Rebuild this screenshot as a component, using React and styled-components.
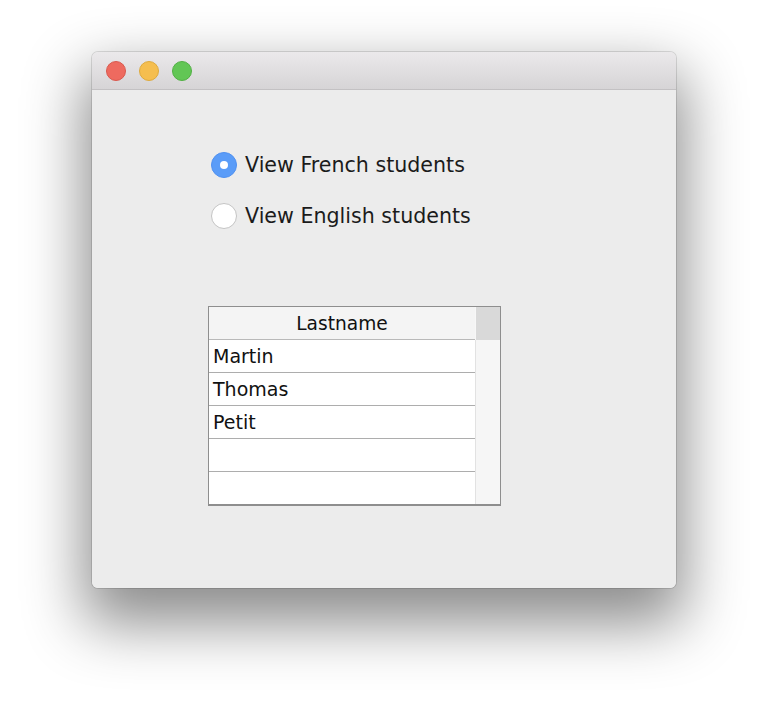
import React, { useState } from "react";
import styled, { createGlobalStyle } from "styled-components";

const Global = createGlobalStyle`
  html, body { margin: 0; padding: 0; background: #ffffff; }
  body { font-family: "DejaVu Sans", "Liberation Sans", Arial, sans-serif; }
`;

const Page = styled.div`
  width: 768px;
  height: 721px;
  padding: 52px 0 0 92px;
  box-sizing: border-box;
  background: #fff;
  overflow: hidden;
`;

const Window = styled.div`
  width: 584px;
  height: 536px;
  border-radius: 6px;
  background: #ececec;
  display: flex;
  flex-direction: column;
  overflow: hidden;
  box-shadow: 0 0 0 1px rgba(0, 0, 0, 0.12), 0 28px 60px 8px rgba(0, 0, 0, 0.45);
`;

const TitleBar = styled.div`
  height: 37px;
  flex: none;
  display: flex;
  align-items: center;
  gap: 13px;
  padding-left: 14px;
  background: linear-gradient(#ebe9eb, #d6d4d6);
  border-bottom: 1px solid #c3c1c3;
`;

const Light = styled.span`
  width: 20px;
  height: 20px;
  border-radius: 50%;
  box-sizing: border-box;
  background: ${(p) => p.$color};
  border: 1px solid ${(p) => p.$border};
`;

const Content = styled.div`
  flex: 1;
  padding: 62px 0 0 116px;
  background: #ececec;
`;

const RadioGroup = styled.div`
  display: flex;
  flex-direction: column;
  gap: 25px;
  margin-left: 3px;
`;

const RadioRow = styled.label`
  display: flex;
  align-items: center;
  gap: 8px;
  height: 26px;
  font-size: 20.6px;
  color: #1b1b1b;
  cursor: default;
`;

const RadioCircle = styled.span`
  width: 26px;
  height: 26px;
  border-radius: 50%;
  box-sizing: border-box;
  display: flex;
  align-items: center;
  justify-content: center;
  background: ${(p) => (p.$checked ? "#5a9cf8" : "#ffffff")};
  border: 1px solid ${(p) => (p.$checked ? "#4f90f0" : "#c4c4c4")};
  &::after {
    content: "";
    width: 8px;
    height: 8px;
    border-radius: 50%;
    background: #fff;
    display: ${(p) => (p.$checked ? "block" : "none")};
  }
`;

const Table = styled.div`
  margin-top: 77px;
  width: 293px;
  box-sizing: border-box;
  border: 1px solid #8e8e8e;
  border-bottom-width: 2px;
  display: flex;
  background: #fff;
`;

const Column = styled.div`
  width: 266px;
  display: flex;
  flex-direction: column;
`;

const HeaderCell = styled.div`
  height: 32px;
  border-bottom: 1px solid #b9b9b9;
  background: #f4f4f4;
  font-size: 18.6px;
  color: #111;
  display: flex;
  align-items: center;
  justify-content: center;
`;

const Cell = styled.div`
  height: 32px;
  border-bottom: ${(p) => (p.$last ? "none" : "1px solid #adadad")};
  padding-left: 4px;
  font-size: 19px;
  color: #111;
  display: flex;
  align-items: center;
  background: #fff;
`;

const ScrollBar = styled.div`
  width: 25px;
  display: flex;
  flex-direction: column;
`;

const ScrollCorner = styled.div`
  height: 33px;
  background: #d9d9d9;
  border-left: 1px solid #f7f7f7;
  box-sizing: border-box;
`;

const ScrollTrack = styled.div`
  flex: 1;
  background: #f6f6f6;
  border-left: 1px solid #e2e2e2;
`;

const names = ["Martin", "Thomas", "Petit", "", ""];

export default function App() {
  const [choice, setChoice] = useState("fr");
  return (
    <>
      <Global />
      <Page>
        <Window>
          <TitleBar>
            <Light $color="#ee6a5f" $border="#d9584d" />
            <Light $color="#f5be4f" $border="#deaa3d" />
            <Light $color="#62c655" $border="#52b044" />
          </TitleBar>
          <Content>
            <RadioGroup>
              <RadioRow onClick={() => setChoice("fr")}>
                <RadioCircle $checked={choice === "fr"} />
                View French students
              </RadioRow>
              <RadioRow onClick={() => setChoice("en")}>
                <RadioCircle $checked={choice === "en"} />
                View English students
              </RadioRow>
            </RadioGroup>
            <Table>
              <Column>
                <HeaderCell>Lastname</HeaderCell>
                {names.map((n, i) => (
                  <Cell key={i} $last={i === names.length - 1}>
                    {n}
                  </Cell>
                ))}
              </Column>
              <ScrollBar>
                <ScrollCorner />
                <ScrollTrack />
              </ScrollBar>
            </Table>
          </Content>
        </Window>
      </Page>
    </>
  );
}
